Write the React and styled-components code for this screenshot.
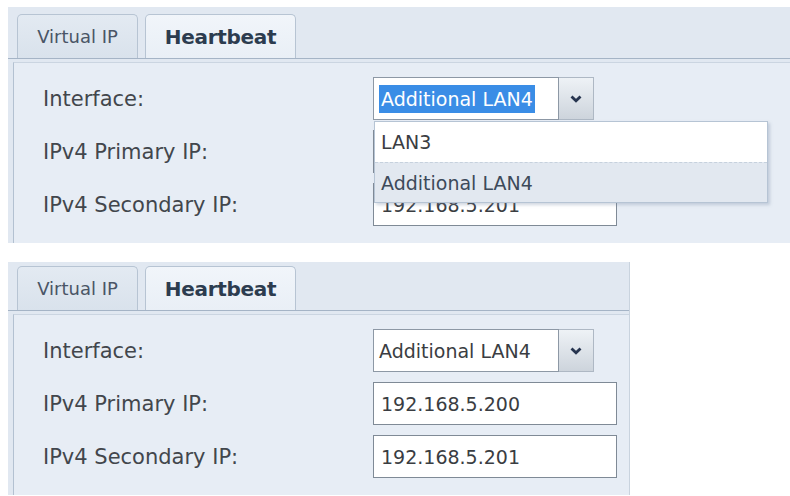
import React from 'react';
import styled, { createGlobalStyle } from 'styled-components';

const GlobalStyle = createGlobalStyle`
  body {
    margin: 0;
    background: #ffffff;
    font-family: "DejaVu Sans", "Liberation Sans", sans-serif;
  }
`;

function Chevron() {
  return (
    <svg width="12" height="8" viewBox="0 0 12 8">
      <path d="M1.5 1.5 L6 5.8 L10.5 1.5" fill="none" stroke="#26344f" strokeWidth="2.8" />
    </svg>
  );
}

function Select({ value, open, options }) {
  return (
    <SelectWrap>
      <SelectField>
        {open ? <Highlight>{value}</Highlight> : <span>{value}</span>}
      </SelectField>
      <SelectButton>
        <Chevron />
      </SelectButton>
      {open && (
        <DropList>
          {options.map((o) => (
            <DropItem key={o} $active={o === value}>{o}</DropItem>
          ))}
        </DropList>
      )}
    </SelectWrap>
  );
}

function HeartbeatPanel({ width, height, stripTop, open }) {
  return (
    <Panel $width={width} $height={height} $edge={width < 700}>
      <TabStrip $top={stripTop}>
        <Tab $w={121}>Virtual IP</Tab>
        <Tab $w={151} $active>Heartbeat</Tab>
      </TabStrip>
      <Body>
        <Form>
          <Label>Interface:</Label>
          <Select value="Additional LAN4" open={open} options={['LAN3', 'Additional LAN4']} />
          <Label>IPv4 Primary IP:</Label>
          <TextInput readOnly value="192.168.5.200" />
          <Label>IPv4 Secondary IP:</Label>
          <TextInput readOnly value="192.168.5.201" />
        </Form>
      </Body>
    </Panel>
  );
}

export default function App() {
  return (
    <Page>
      <GlobalStyle />
      <HeartbeatPanel width={782} height={236} stripTop={7} open />
      <HeartbeatPanel width={622} height={233} stripTop={4} />
    </Page>
  );
}

const Page = styled.div`
  display: flex;
  flex-direction: column;
  gap: 19px;
  padding: 7px 0 0 8px;
`;

const Panel = styled.div`
  width: ${(p) => p.$width}px;
  height: ${(p) => p.$height}px;
  box-sizing: border-box;
  display: flex;
  flex-direction: column;
  background: #e1e8f1;
  border-right: ${(p) => (p.$edge ? '1px solid #c9d3de' : 'none')};
`;

const TabStrip = styled.div`
  display: flex;
  align-items: flex-end;
  gap: 7px;
  padding: ${(p) => p.$top}px 0 0 9px;
  border-bottom: 1px solid #a5b4c6;
`;

const Tab = styled.div`
  width: ${(p) => p.$w}px;
  height: 44px;
  box-sizing: border-box;
  display: flex;
  align-items: center;
  justify-content: center;
  border: 1px solid #b7c4d3;
  border-bottom: none;
  border-radius: 5px 5px 0 0;
  background: ${(p) => (p.$active ? 'linear-gradient(#f1f5fa, #e9eff6)' : 'linear-gradient(#e3eaf2, #d9e2ec)')};
  color: ${(p) => (p.$active ? '#2c3c4f' : '#4a5566')};
  font-size: ${(p) => (p.$active ? '20px' : '18px')};
  font-weight: ${(p) => (p.$active ? 700 : 400)};
  letter-spacing: ${(p) => (p.$active ? '-0.3px' : '0px')};
`;

const Body = styled.div`
  flex: 1;
  margin: 3px 0 0 5px;
  background: #e7edf5;
  border-top: 1px solid #cbd5e1;
  border-left: 1px solid #b3c1d1;
`;

const Form = styled.div`
  display: grid;
  grid-template-columns: 330px auto;
  row-gap: 10px;
  align-items: center;
  justify-items: start;
  padding: 14px 0 0 29px;
`;

const Label = styled.div`
  font-size: 21px;
  color: #42464c;
`;

const SelectWrap = styled.div`
  position: relative;
  z-index: 2;
  display: flex;
  width: 221px;
  height: 43px;
`;

const SelectField = styled.div`
  flex: 1;
  display: flex;
  align-items: center;
  padding-left: 5px;
  background: #ffffff;
  border: 1px solid #8d98a5;
  font-size: 19px;
  color: #3a3d42;
`;

const Highlight = styled.span`
  background: #3a8de6;
  color: #ffffff;
  padding: 3px 2px;
`;

const SelectButton = styled.div`
  width: 34px;
  display: flex;
  align-items: center;
  justify-content: center;
  border: 1px solid #aeb8c4;
  border-left: none;
  background: linear-gradient(#eef2f6, #cdd4dc);
`;

const DropList = styled.div`
  position: absolute;
  top: calc(100% + 1px);
  left: 1px;
  width: 392px;
  background: #ffffff;
  border: 1px solid #b6c4d4;
  box-shadow: 2px 2px 3px rgba(120, 140, 165, 0.35);
`;

const DropItem = styled.div`
  height: 40px;
  box-sizing: border-box;
  display: flex;
  align-items: center;
  padding-left: 6px;
  font-size: 19px;
  color: ${(p) => (p.$active ? '#3d4a5a' : '#3a3d42')};
  background: ${(p) => (p.$active ? '#e2e8f0' : '#ffffff')};
  border-top: ${(p) => (p.$active ? '1px dashed #c6d1dd' : 'none')};
`;

const TextInput = styled.input`
  width: 244px;
  height: 43px;
  box-sizing: border-box;
  padding: 0 7px;
  border: 1px solid #7f8a96;
  background: #ffffff;
  font-family: "DejaVu Sans", "Liberation Sans", sans-serif;
  font-size: 19px;
  color: #3a3d42;
  outline: none;
`;
